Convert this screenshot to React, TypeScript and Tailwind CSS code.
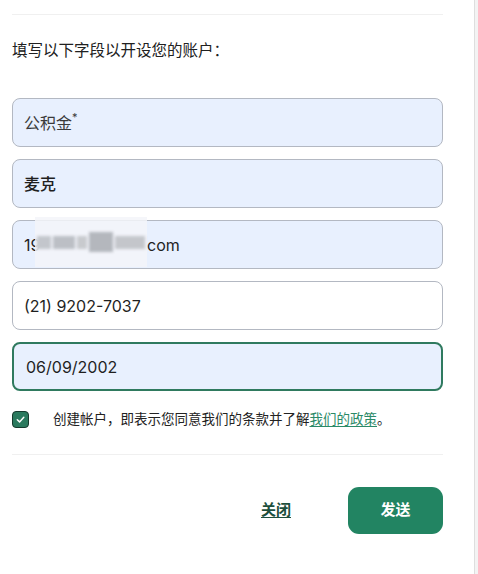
const FONT = 'font-["Inter","Noto_Sans_CJK_SC",sans-serif]';

function Field({ children, focused, autofill = true }: { children: React.ReactNode; focused?: boolean; autofill?: boolean }) {
  return (
    <div
      className={[
        'h-[49px] rounded-lg flex items-center px-[11px] text-[16px] text-[#1f1f1f]',
        autofill ? 'bg-[#e8f0fe]' : 'bg-white',
        focused ? 'border-2 border-[#2f7a5f] px-[12px]' : 'border border-[#b3b8c2]',
      ].join(' ')}
    >
      {children}
    </div>
  );
}

export default function App() {
  return (
    <div className={`w-[478px] h-[574px] flex bg-white ${FONT}`}>
      <div className="w-[474px] px-3">
        {/* top divider */}
        <div className="mt-[14px] h-px bg-[#f0f0f0] w-[431px]" />

        <p className="mt-[26px] text-[15.5px] leading-[20px] text-[#202020]">填写以下字段以开设您的账户：</p>

        {/* fields */}
        <div className="mt-[37px] w-[431px] flex flex-col gap-3">
          <Field>
            <span className="text-[#3a3a3a]">公积金<span className="text-[11px] align-top relative top-[-2px]">*</span></span>
          </Field>
          <Field>
            <span className="font-medium">麦克</span>
          </Field>
          <div className="relative">
            <Field>
              <span className="w-[20px]">19</span>
              <span className="w-[103px] shrink-0" />
              <span>com</span>
            </Field>
            {/* blurred email overlay */}
            <div className="absolute left-[23px] top-[-3px] w-[112px] h-[50px] bg-[#f3f5f9]/85 flex items-center pl-[2px]">
              <div className="flex items-center blur-[1.5px] gap-[2px]">
                <div className="w-[14px] h-[13px] bg-[#c3c6cc]" />
                <div className="w-[22px] h-[13px] bg-[#bcbfc5]" />
                <div className="w-[10px] h-[13px] bg-[#c8cace]" />
                <div className="w-[24px] h-[20px] bg-[#b4b7bd]" />
                <div className="w-[30px] h-[13px] bg-[#c4c6cb]" />
              </div>
            </div>
          </div>
          <Field autofill={false}>
            <span>(21) 9202-7037</span>
          </Field>
          <Field focused>
            <span>06/09/2002</span>
          </Field>
        </div>

        {/* consent */}
        <div className="mt-[18px] flex items-center h-[20px]">
          <div className="w-[17px] h-[17px] rounded-[4px] bg-[#2a7a5e] border-[1.5px] border-[#163a2d] flex items-center justify-center">
            <svg width="11" height="11" viewBox="0 0 12 12" fill="none">
              <path d="M2.5 6.2 L5 8.6 L9.6 3.6" stroke="white" strokeWidth="1.6" strokeLinecap="round" strokeLinejoin="round" />
            </svg>
          </div>
          <p className="ml-[24px] text-[13.5px] text-[#222]">
            创建帐户，即表示您同意我们的条款并了解<span className="text-[#2b8a68] underline underline-offset-2">我们的政策</span>。
          </p>
        </div>

        {/* bottom divider */}
        <div className="mt-[25px] h-px bg-[#f0f0f0] w-[431px]" />

        {/* actions */}
        <div className="mt-[32px] w-[431px] flex items-center justify-end">
          <button className="text-[15px] font-bold text-[#1d4f3d] underline underline-offset-2 mr-[57px]">关闭</button>
          <button className="w-[95px] h-[47px] rounded-[11px] bg-[#228462] text-white text-[15px] font-bold">发送</button>
        </div>
      </div>
      <div className="w-[4px] h-full border-l border-[#dedede] bg-[#f3f3f3]" />
    </div>
  );
}
